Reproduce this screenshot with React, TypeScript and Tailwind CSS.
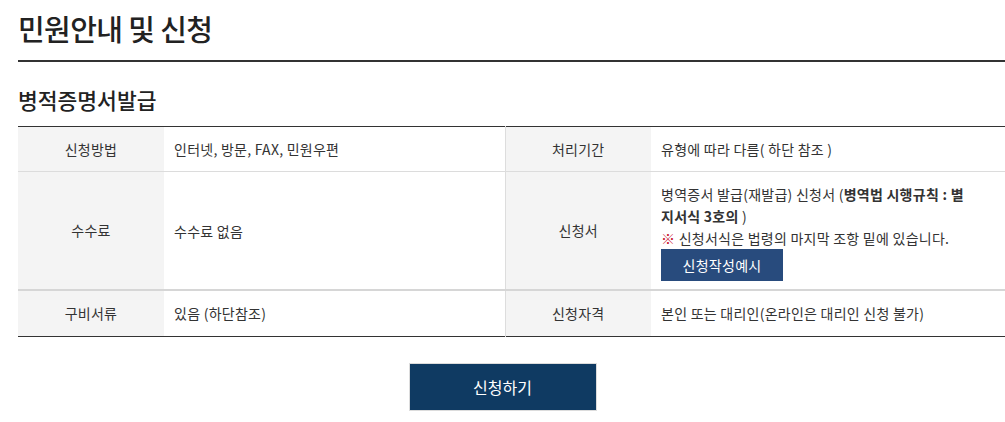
import React from 'react';

/* ------------------------------------------------------------------ */
/*  Table cells                                                        */
/* ------------------------------------------------------------------ */

const FONT = "font-['Noto_Sans_CJK_KR','Noto_Sans',sans-serif]";

function Th({ children, left = false }: { children: React.ReactNode; left?: boolean }) {
  return (
    <th
      className={`bg-[#f4f4f4] text-center align-middle font-normal text-[14px] text-[#333] ${
        left ? 'border-l border-[#dddddd]' : ''
      }`}
    >
      {children}
    </th>
  );
}

function Td({ children }: { children: React.ReactNode }) {
  return (
    <td className="px-[10px] py-[11px] text-left align-middle text-[14px] leading-[22px] text-[#333]">
      {children}
    </td>
  );
}

export default function App() {
  return (
    <div className={`${FONT} w-full bg-white`}>
      <div className="pl-[18px]">
        {/* Page title */}
        <h2 className="border-b-2 border-[#333] pt-[6px] pb-[10px] text-[29px] font-medium leading-[44px] tracking-[-0.6px] text-[#222]">
          민원안내 및 신청
        </h2>

        {/* Section title */}
        <h3 className="mt-[25px] text-[21.5px] font-medium leading-[26px] text-[#222]">
          병적증명서발급
        </h3>

        {/* Info table */}
        <table className="mt-[13px] w-[987px] table-fixed border-collapse border-t border-b border-[#333] tracking-[0.25px]">
          <colgroup>
            <col className="w-[146px]" />
            <col className="w-[341px]" />
            <col className="w-[146px]" />
            <col className="w-[354px]" />
          </colgroup>
          <tbody>
            <tr className="h-[45px] border-b border-[#dcdcdc]">
              <Th>신청방법</Th>
              <Td>인터넷, 방문, FAX, 민원우편</Td>
              <Th left>처리기간</Th>
              <Td>유형에 따라 다름( 하단 참조 )</Td>
            </tr>
            <tr className="border-b-2 border-[#d6d6d6]">
              <Th>수수료</Th>
              <Td>수수료 없음</Td>
              <Th left>신청서</Th>
              <td className="px-[10px] pt-[11px] pb-[8px] text-left align-middle text-[14px] leading-[22px] text-[#333]">
                <p>
                  병역증서 발급(재발급) 신청서 (<b className="font-bold">병역법 시행규칙 : 별<br />지서식 3호의</b> )
                </p>
                <p>
                  <span className="text-[#c8102e]">※</span> 신청서식은 법령의 마지막 조항 밑에 있습니다.
                </p>
                <button className="flex h-[32px] w-[122px] items-center justify-center bg-[#284b7d] text-[14px] text-white">
                  신청작성예시
                </button>
              </td>
            </tr>
            <tr className="h-[46px]">
              <Th>구비서류</Th>
              <Td>있음 (하단참조)</Td>
              <Th left>신청자격</Th>
              <Td>본인 또는 대리인(온라인은 대리인 신청 불가)</Td>
            </tr>
          </tbody>
        </table>
      </div>

      {/* Submit */}
      <div className="mt-[26px] flex justify-center pb-[11px]">
        <button className="h-[48px] w-[188px] border border-[#dcdcdc] bg-[#0f3a62] text-[16px] text-white">
          신청하기
        </button>
      </div>
    </div>
  );
}
